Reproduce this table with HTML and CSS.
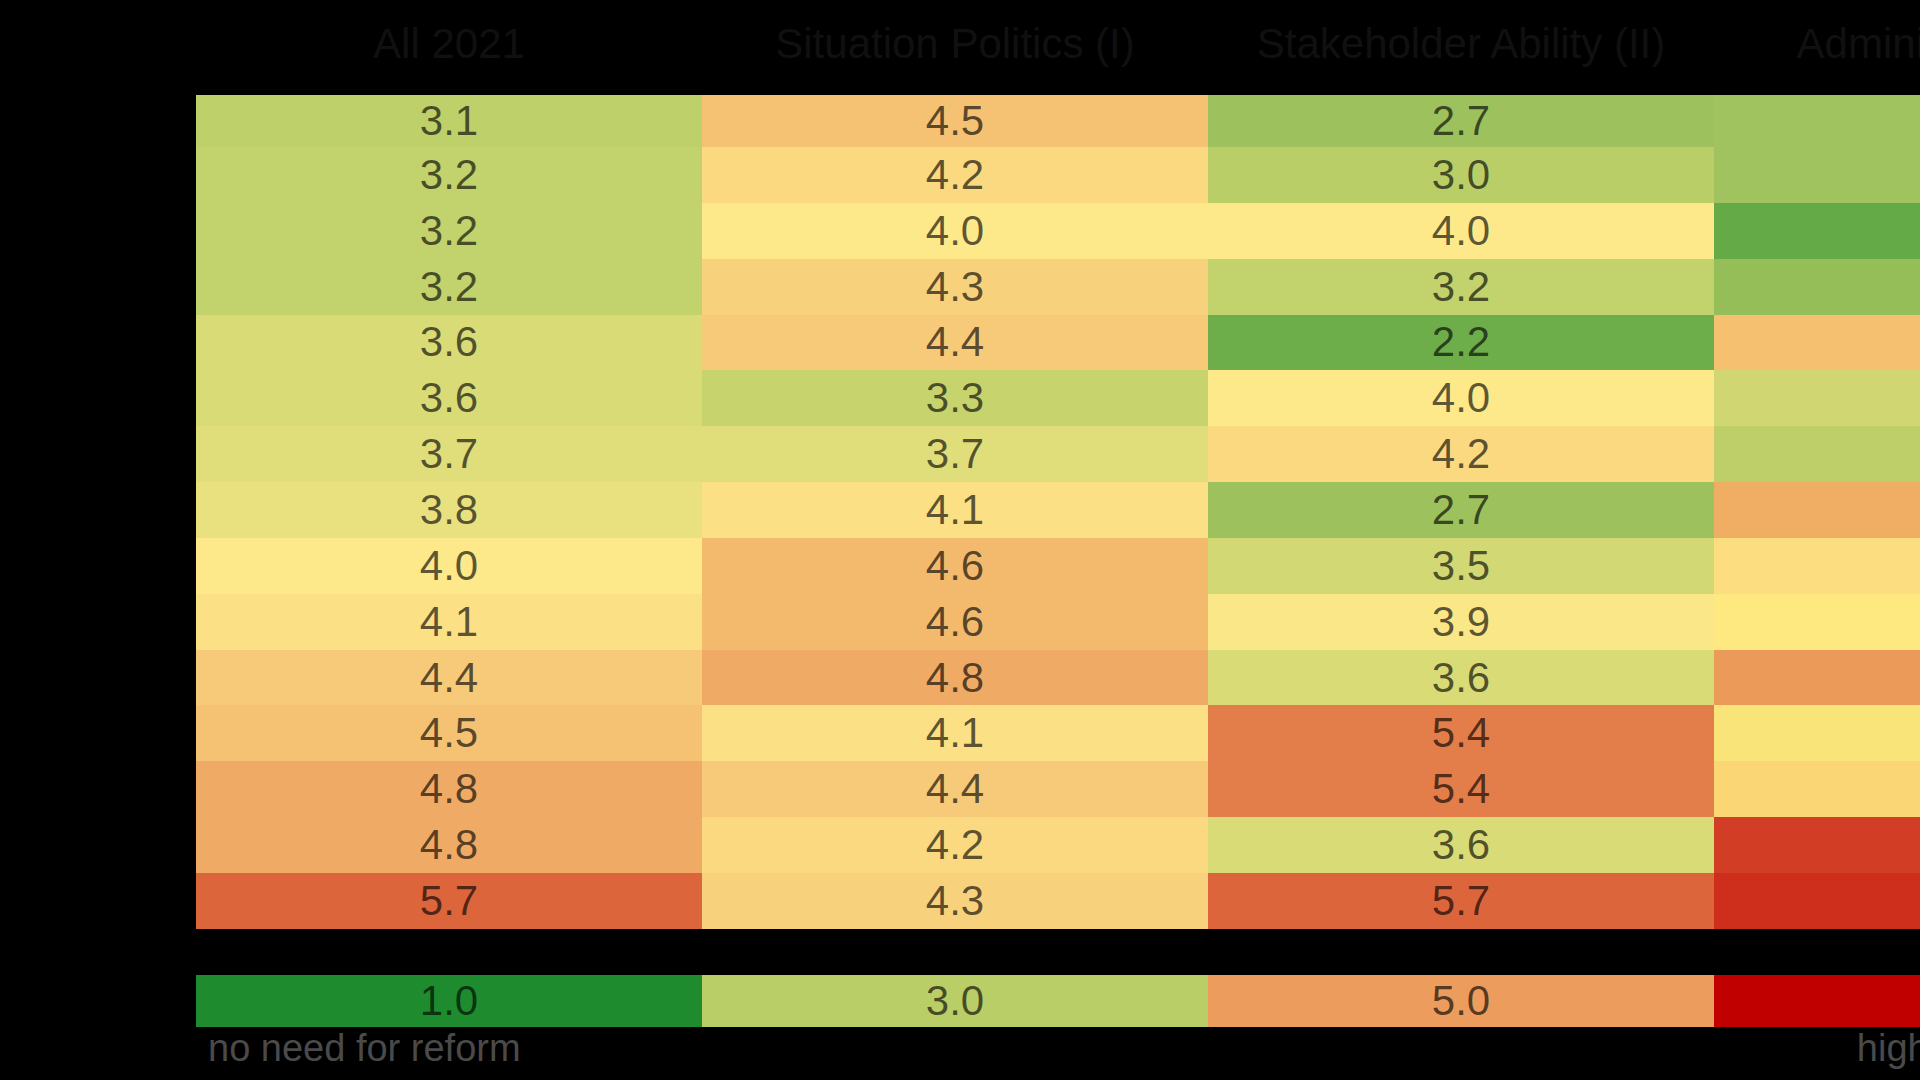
FILE: index.html
```html
<!DOCTYPE html>
<html lang="en">
<head>
<meta charset="utf-8">
<title>Reform need heatmap</title>
<link rel="stylesheet" href="styles.css">
</head>
<body>
<main class="chart">
  <div class="head">
    <div class="head-cell">All 2021</div>
    <div class="head-cell">Situation Politics (I)</div>
    <div class="head-cell">Stakeholder Ability (II)</div>
    <div class="head-cell">Administration (III)</div>
  </div>

  <div class="grid">
    <div class="cell" style="background:rgb(190,208,106)">3.1</div>
    <div class="cell" style="background:rgb(245,194,115)">4.5</div>
    <div class="cell" style="background:rgb(157,194,93)">2.7</div>
    <div class="cell" style="background:rgb(160,195,95)">2.8</div>

    <div class="cell" style="background:rgb(194,210,108)">3.2</div>
    <div class="cell" style="background:rgb(250,217,129)">4.2</div>
    <div class="cell" style="background:rgb(186,206,104)">3.0</div>
    <div class="cell" style="background:rgb(160,195,95)">2.8</div>

    <div class="cell" style="background:rgb(194,210,108)">3.2</div>
    <div class="cell" style="background:rgb(253,232,138)">4.0</div>
    <div class="cell" style="background:rgb(253,232,138)">4.0</div>
    <div class="cell" style="background:rgb(100,170,70)">2.2</div>

    <div class="cell" style="background:rgb(194,210,108)">3.2</div>
    <div class="cell" style="background:rgb(248,209,124)">4.3</div>
    <div class="cell" style="background:rgb(194,210,108)">3.2</div>
    <div class="cell" style="background:rgb(150,190,88)">2.6</div>

    <div class="cell" style="background:rgb(217,219,119)">3.6</div>
    <div class="cell" style="background:rgb(246,202,120)">4.4</div>
    <div class="cell" style="background:rgb(109,174,75)">2.2</div>
    <div class="cell" style="background:rgb(245,192,112)">4.5</div>

    <div class="cell" style="background:rgb(217,219,119)">3.6</div>
    <div class="cell" style="background:rgb(199,212,110)">3.3</div>
    <div class="cell" style="background:rgb(253,232,138)">4.0</div>
    <div class="cell" style="background:rgb(208,214,114)">3.5</div>

    <div class="cell" style="background:rgb(224,222,123)">3.7</div>
    <div class="cell" style="background:rgb(224,222,123)">3.7</div>
    <div class="cell" style="background:rgb(250,217,129)">4.2</div>
    <div class="cell" style="background:rgb(190,206,104)">3.2</div>

    <div class="cell" style="background:rgb(233,225,128)">3.8</div>
    <div class="cell" style="background:rgb(251,224,133)">4.1</div>
    <div class="cell" style="background:rgb(157,194,93)">2.7</div>
    <div class="cell" style="background:rgb(240,174,100)">4.7</div>

    <div class="cell" style="background:rgb(253,232,138)">4.0</div>
    <div class="cell" style="background:rgb(243,186,110)">4.6</div>
    <div class="cell" style="background:rgb(210,216,116)">3.5</div>
    <div class="cell" style="background:rgb(252,222,128)">4.1</div>

    <div class="cell" style="background:rgb(251,224,133)">4.1</div>
    <div class="cell" style="background:rgb(243,186,110)">4.6</div>
    <div class="cell" style="background:rgb(250,231,136)">3.9</div>
    <div class="cell" style="background:rgb(254,233,128)">4.0</div>

    <div class="cell" style="background:rgb(246,202,120)">4.4</div>
    <div class="cell" style="background:rgb(239,171,101)">4.8</div>
    <div class="cell" style="background:rgb(217,219,119)">3.6</div>
    <div class="cell" style="background:rgb(236,154,90)">5.0</div>

    <div class="cell" style="background:rgb(245,194,115)">4.5</div>
    <div class="cell" style="background:rgb(251,224,133)">4.1</div>
    <div class="cell" style="background:rgb(227,125,74)">5.4</div>
    <div class="cell" style="background:rgb(249,228,122)">4.0</div>

    <div class="cell" style="background:rgb(239,171,101)">4.8</div>
    <div class="cell" style="background:rgb(246,202,120)">4.4</div>
    <div class="cell" style="background:rgb(227,125,74)">5.4</div>
    <div class="cell" style="background:rgb(250,214,116)">4.2</div>

    <div class="cell" style="background:rgb(239,171,101)">4.8</div>
    <div class="cell" style="background:rgb(250,217,129)">4.2</div>
    <div class="cell" style="background:rgb(217,219,119)">3.6</div>
    <div class="cell" style="background:rgb(210,62,37)">6.2</div>

    <div class="cell" style="background:rgb(221,101,60)">5.7</div>
    <div class="cell" style="background:rgb(248,209,124)">4.3</div>
    <div class="cell" style="background:rgb(221,101,60)">5.7</div>
    <div class="cell" style="background:rgb(205,47,28)">6.4</div>
  </div>

  <div class="legend">
    <div class="cell legend-cell l1">1.0</div>
    <div class="cell legend-cell l3">3.0</div>
    <div class="cell legend-cell l5">5.0</div>
    <div class="cell legend-cell l7">7.0</div>
  </div>

  <div class="labels">
    <span class="label">no need for reform</span>
    <span class="label">high need for reform</span>
  </div>
</main>
</body>
</html>
```

FILE: styles.css
```css
html, body {
  margin: 0;
  padding: 0;
  background: #000;
  overflow: hidden;
  width: 1920px;
  height: 1080px;
}

.chart {
  width: 2024px;
  padding-left: 196px;
  font-family: "Liberation Sans", Arial, sans-serif;
}

.head {
  display: grid;
  grid-template-columns: repeat(4, 506px);
  height: 95px;
}

.head-cell {
  display: flex;
  align-items: center;
  justify-content: center;
  padding-bottom: 8px;
  box-sizing: border-box;
  font-size: 42px;
  color: #101010;
  white-space: nowrap;
}

.grid {
  display: grid;
  grid-template-columns: repeat(4, 506px);
  grid-template-rows: 52px repeat(14, 55.85px);
}

.cell {
  display: flex;
  align-items: center;
  justify-content: center;
  font-size: 42px;
  color: rgba(0, 0, 0, 0.64);
  white-space: nowrap;
}

.legend {
  display: grid;
  grid-template-columns: repeat(4, 506px);
  height: 52px;
  margin-top: 46px;
}

.l1 { background: rgb(30, 140, 46); }
.l3 { background: rgb(186, 206, 104); }
.l5 { background: rgb(236, 156, 92); }
.l7 { background: rgb(192, 0, 0); }

.labels {
  display: flex;
  justify-content: space-between;
  padding: 0 21px 0 12px;
}

.label {
  font-size: 38px;
  color: #4a4a4a;
  white-space: nowrap;
}
```
